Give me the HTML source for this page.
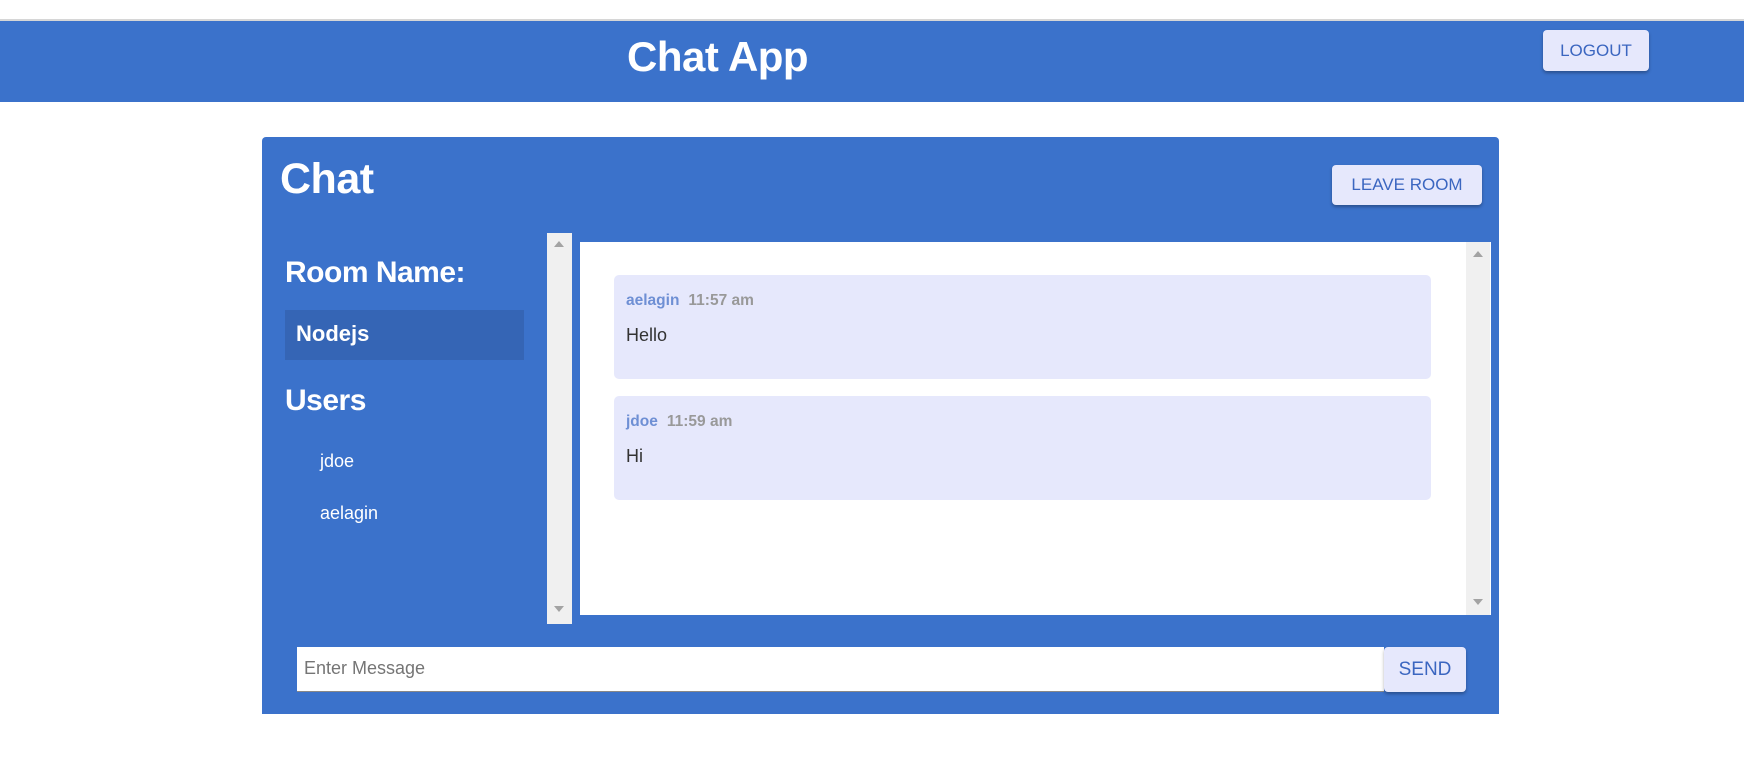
<!DOCTYPE html>
<html><head><meta charset="utf-8"><style>
*{box-sizing:border-box;margin:0;padding:0}
body{width:1744px;height:769px;background:#fff;font-family:"Liberation Sans",Arial,sans-serif;position:relative;overflow:hidden}
.abs{position:absolute}
.hdr{left:0;top:19px;width:1744px;height:83px;background:#3b72cb;border-top:2px solid #d6d6d6}
.btn{background:#e6e8fc;color:#3b66c0;border-radius:4px;box-shadow:0 2px 3px rgba(0,0,0,.3);display:flex;align-items:center;justify-content:center;font-size:18px}
.card{left:262px;top:137px;width:1237px;height:577px;background:#3b72cb;border-radius:4px 4px 0 0}
.w{color:#fff}
.msg{background:#e6e8fc;border-radius:5px;left:614px;width:817px;height:104px}
.nm{font-weight:bold;font-size:15.5px;color:#6e8fd4}
.tm{font-weight:bold;font-size:15.5px;color:#999;margin-left:9px}
</style></head><body>
<div class="abs hdr"></div>
<div class="abs w" style="left:627px;top:33px;font-size:42px;font-weight:bold;letter-spacing:-0.5px">Chat App</div>
<div class="abs btn" style="left:1543px;top:30px;width:106px;height:41px;font-size:17px">LOGOUT</div>
<div class="abs card"></div>
<div class="abs w" style="left:280px;top:155px;font-size:43px;font-weight:bold;letter-spacing:-0.5px">Chat</div>
<div class="abs btn" style="left:1332px;top:165px;width:150px;height:40px;font-size:17px">LEAVE ROOM</div>
<div class="abs w" style="left:285px;top:256px;font-size:30px;font-weight:bold;letter-spacing:-0.5px">Room Name:</div>
<div class="abs" style="left:285px;top:310px;width:239px;height:50px;background:#3565b5"></div>
<div class="abs w" style="left:296px;top:321px;font-size:22px;font-weight:bold">Nodejs</div>
<div class="abs w" style="left:285px;top:384px;font-size:30px;font-weight:bold;letter-spacing:-0.5px">Users</div>
<div class="abs w" style="left:320px;top:451px;font-size:18px">jdoe</div>
<div class="abs w" style="left:320px;top:503px;font-size:18px">aelagin</div>
<div class="abs" style="left:547px;top:233px;width:25px;height:391px;background:#f0f0f0"></div>
<div class="abs" style="left:554px;top:241px;width:0;height:0;border:5px solid transparent;border-bottom:6px solid #a3a3a3;border-top:0"></div>
<div class="abs" style="left:554px;top:606px;width:0;height:0;border:5px solid transparent;border-top:6px solid #a3a3a3;border-bottom:0"></div>
<div class="abs" style="left:580px;top:242px;width:911px;height:373px;background:#fff"></div>
<div class="abs" style="left:1466px;top:242px;width:24px;height:373px;background:#f0f0f0"></div>
<div class="abs" style="left:1473px;top:251px;width:0;height:0;border:5px solid transparent;border-bottom:6px solid #a3a3a3;border-top:0"></div>
<div class="abs" style="left:1473px;top:599px;width:0;height:0;border:5px solid transparent;border-top:6px solid #a3a3a3;border-bottom:0"></div>
<div class="abs msg" style="top:275px"></div>
<div class="abs" style="left:626px;top:292px"><span class="nm">aelagin</span><span class="tm">11:57 am</span></div>
<div class="abs" style="left:626px;top:325px;font-size:18px;color:#333">Hello</div>
<div class="abs msg" style="top:396px"></div>
<div class="abs" style="left:626px;top:413px"><span class="nm">jdoe</span><span class="tm">11:59 am</span></div>
<div class="abs" style="left:626px;top:446px;font-size:18px;color:#333">Hi</div>
<div class="abs" style="left:297px;top:647px;width:1087px;height:45px;background:#fff;border-bottom:1px solid #888"></div>
<div class="abs" style="left:304px;top:658px;font-size:18px;color:#757575">Enter Message</div>
<div class="abs btn" style="left:1384px;top:647px;width:82px;height:45px;font-size:19px">SEND</div>
</body></html>
